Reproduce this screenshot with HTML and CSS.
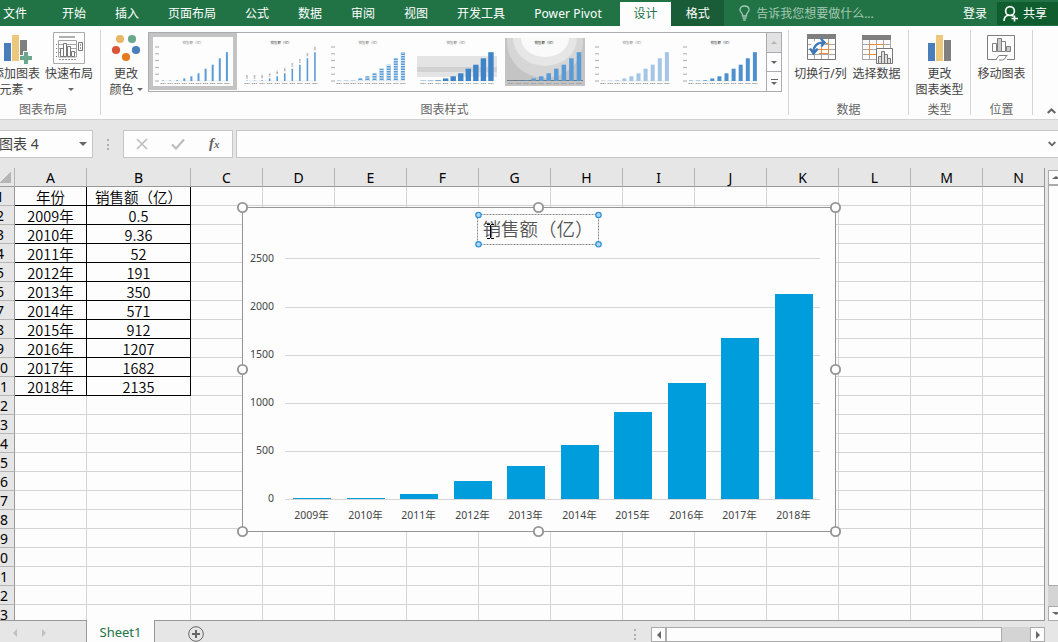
FILE: index.html
```html
<!DOCTYPE html>
<html lang="zh-CN">
<head>
  <meta charset="UTF-8">
  <meta name="viewport" content="width=device-width, initial-scale=1.0">
  <title>销售额</title>
  <link rel="stylesheet" href="styles.css">
</head>
<body>

<nav class="tabs">
  <span class="tab file">文件</span>
  <span class="tab">开始</span>
  <span class="tab">插入</span>
  <span class="tab">页面布局</span>
  <span class="tab">公式</span>
  <span class="tab">数据</span>
  <span class="tab">审阅</span>
  <span class="tab">视图</span>
  <span class="tab">开发工具</span>
  <span class="tab pivot">Power Pivot</span>
  <span class="tab active">设计</span>
  <span class="tab format">格式</span>
  <span class="tell">
    <svg width="11" height="16" viewBox="0 0 11 16" fill="none" stroke="#a5c8b3" stroke-width="1.3">
      <path d="M3.5 11V9.5C3.5 8 1 7.5 1 4.8C1 2.5 3 1 5.5 1S10 2.5 10 4.8C10 7.5 7.5 8 7.5 9.5V11ZM3.5 13H7.5M4.2 15H6.8"/>
    </svg>
    告诉我您想要做什么...
  </span>
  <span class="login">登录</span>
  <span class="share">
    <svg width="16" height="18" viewBox="0 0 16 18" fill="none" stroke="#fff" stroke-width="1.6">
      <circle cx="7" cy="6" r="4.4"/>
      <path d="M1 16C1 12.5 3 10.6 5.5 10.2M8.5 10.2L10.5 11.2M11.5 10.5V16.5M8.5 13.5H15"/>
    </svg>
    共享
  </span>
</nav>

<section class="ribbon">
  <div class="group layout">
    <div class="tools">
      <div class="tool add">
        <svg width="32" height="34" viewBox="0 0 32 34">
          <path fill="#4a7ebb" d="M4 11h7v18H4z"/>
          <path fill="#ecc77c" d="M12 3h7v26h-7z"/>
          <path fill="#7f7f7f" d="M20 8h7v15h-7z"/>
          <path fill="#6aa78c" stroke="#fdfdfd" d="M23.5 19.5h5v4h4v5h-4v4h-5v-4h-4v-5h4z"/>
        </svg>
        <span>添加图表</span>
        <span>元素 <i class="arrow"></i></span>
      </div>
      <div class="tool quick">
        <svg width="32" height="34" viewBox="0 0 32 34" fill="none">
          <path stroke="#ababab" d="M.5 .5h31v31H.5z"/>
          <path stroke="#b0b0b0" stroke-width="2" d="M6 5h16"/>
          <path stroke="#a5a5a5" d="M5.5 8.500h18v16.500h-18zM6 12.500h17M6 16.500h17M6 20.500h17"/>
          <path stroke="#777" stroke-dasharray="1 3" d="M3.500 12v13"/>
          <path stroke="#777" fill="#fff" d="M7.500 16.500h3v8h-3zM10.500 11.500h3v13h-3zM14.500 14.500h3v10h-3zM18.500 19.500h3v5h-3zM25.500 10.500h4v8h-4z"/>
          <path stroke="#999" stroke-dasharray="2 1" d="M6 27.500h17M27.500 12v6"/>
        </svg>
        <span>快速布局</span>
        <span class="solo"><i class="arrow"></i></span>
      </div>
    </div>
    <div class="caption">图表布局</div>
  </div>

  <div class="group styles">
    <div class="tools">
      <div class="tool colors">
        <svg width="32" height="34" viewBox="0 0 32 34">
          <circle cx="10" cy="7" r="4.100" fill="#e9b665"/>
          <circle cx="22" cy="7" r="4.100" fill="#6aa78c"/>
          <circle cx="6" cy="18" r="4.100" fill="#d85636"/>
          <circle cx="26" cy="18" r="4.100" fill="#4a7ebb"/>
          <circle cx="16" cy="25" r="4.100" fill="#e57a1f"/>
        </svg>
        <span>更改</span>
        <span>颜色 <i class="arrow"></i></span>
      </div>
      <div class="gallery">
        <div class="thumbs" id="thumbs"></div>
        <div class="gallery-nav">
          <b class="off"><i class="arrow up"></i></b>
          <b><i class="arrow"></i></b>
          <b class="more"><i class="arrow"></i></b>
        </div>
      </div>
    </div>
    <div class="caption">图表样式</div>
  </div>

  <div class="group data">
    <div class="tools">
      <div class="tool">
        <svg width="32" height="34" viewBox="0 0 32 34" fill="none">
          <path stroke="#a8a8a8" d="M2.500 6v21M9.500 6v21M16.500 6v21M23.500 6v21M2 12.500h28M2 17.500h28M2 22.500h28"/>
          <path stroke="#777" d="M2.500 3.500h28v24h-28z"/>
          <path fill="#7f7f7f" d="M2 2h29v5H2z"/>
          <path stroke="#e88b3a" d="M13.500 17.500h10M16.500 12v10M23.500 11.500v10.500M16 11.500h8M14 21.500h10"/>
          <path fill="#fdfdfd" d="M4 16l4-6 8-3 5 4-4 4-4 2-1 5H8z"/>
          <path stroke="#3f78b8" stroke-width="2.200" d="M8.500 20C8.500 14 12 10.700 18 10.700"/>
          <path fill="#3f78b8" d="M4 17l2-1 2.500 2.500L12 16l1.500 1.500L8.500 23.500zM15 7l1.500-1.200 4.700 4.700-4.200 4.700-1.600-1.200 2-3.500z"/>
        </svg>
        <span>切换行/列</span>
      </div>
      <div class="tool">
        <svg width="32" height="34" viewBox="0 0 32 34" fill="none">
          <path stroke="#a8a8a8" d="M1.500 8v20M8.500 8v20M15.500 8v20M22.500 8v20M29.500 8v10M1 12.500h29M1 17.500h29M1 22.500h20M1 27.500h16"/>
          <path fill="#7f7f7f" d="M1 3h29v5H1z"/>
          <path stroke="#e88b3a" d="M8 12.500h15M8 22.500h7M8.500 12v10"/>
          <path fill="#fdfdfd" stroke="#777" d="M15.500 16.500h16v15h-16z"/>
          <path stroke="#777" fill="#ddd" d="M17.500 24.500h3v7h-3zM20.500 19.500h3v12h-3zM23.500 22.500h3v9h-3zM26.500 26.500h3v5h-3z"/>
        </svg>
        <span>选择数据</span>
      </div>
    </div>
    <div class="caption">数据</div>
  </div>

  <div class="group type">
    <div class="tools">
      <div class="tool">
        <svg width="32" height="34" viewBox="0 0 32 34">
          <path fill="#4a7ebb" d="M4 11h7v18H4z"/>
          <path fill="#ecc77c" d="M12 3h7v26h-7z"/>
          <path fill="#7f7f7f" d="M20 8h7v21h-7z"/>
        </svg>
        <span>更改</span>
        <span>图表类型</span>
      </div>
    </div>
    <div class="caption">类型</div>
  </div>

  <div class="group place">
    <div class="tools">
      <div class="tool">
        <svg width="32" height="34" viewBox="0 0 32 34" fill="none" stroke="#7f7f7f">
          <path d="M10.500 27.500h-9v-24h27v24h-7.500"/>
          <path d="M9.500 28l3.500-4.500h7.500l-1.500 3-2.500 1.500h-3.500M13 23.500h8.500"/>
          <path fill="#fff" d="M6.500 11.500h4v8h-4z"/>
          <path fill="#ccc" d="M11.500 6.500h4v13h-4zM20.500 14.500h4v5h-4z"/>
          <path fill="#fff" d="M15.500 9.500h4v10h-4z"/>
        </svg>
        <span>移动图表</span>
      </div>
    </div>
    <div class="caption">位置</div>
  </div>

  <div class="collapse">
    <svg width="9" height="6" viewBox="0 0 9 6" fill="none" stroke="#666" stroke-width="2"><path d="M.7 5l3.800-3.600L8.300 5"/></svg>
  </div>
</section>

<section class="formula">
  <div class="namebox"><span>图表 4</span><i class="arrow"></i></div>
  <div class="dots"></div>
  <div class="fx">
    <svg width="12" height="12" viewBox="0 0 12 12" fill="none" stroke="#bdbdbd" stroke-width="1.600"><path d="M1 1l10 10M11 1L1 11"/></svg>
    <svg width="14" height="12" viewBox="0 0 14 12" fill="none" stroke="#bdbdbd" stroke-width="2.200"><path d="M1 6.500l4 4L13 1.500"/></svg>
    <em>f<small>x</small></em>
  </div>
  <div class="input">
    <svg width="8" height="6" viewBox="0 0 8 6" fill="none" stroke="#666" stroke-width="1.800"><path d="M.7 1L4 4.300 7.300 1"/></svg>
  </div>
</section>

<main class="sheet">
  <div class="grid" id="grid"></div>
  <div class="vscroll">
    <b><i class="arrow up"></i></b>
    <div class="thumb"></div>
    <div class="track"></div>
    <b><i class="arrow"></i></b>
  </div>
  <svg class="chart" id="chart" width="594" height="325"></svg>
</main>

<footer class="bottom">
  <div class="nav"><i class="arrow left"></i><i class="arrow right"></i></div>
  <div class="sheet-tab">Sheet1</div>
  <div class="new">
    <svg width="16" height="16" viewBox="0 0 16 16" fill="none" stroke="#666"><circle cx="8" cy="8" r="7.300"/><path stroke-width="2" d="M8 4v8M4 8h8"/></svg>
  </div>
  <div class="dots"></div>
  <div class="hscroll">
    <b><i class="arrow left"></i></b>
    <div class="thumb"></div>
    <div class="track"></div>
    <b><i class="arrow right"></i></b>
  </div>
</footer>

<script src="script.js"></script>
</body>
</html>
```
FILE: styles.css
```css
body {
    margin: 0;
    width: 1058px;
    height: 642px;
    overflow: hidden;
    display: flex;
    flex-direction: column;
    background-color: #e6e6e6;
    font-family: "Noto Sans", "Noto Sans CJK SC", sans-serif;
    font-size: 12px;
    color: #444;
}

svg {
    display: block;
    flex: none;
}

/* Menu */
.tabs {
    display: flex;
    height: 26px;
    background-color: #217346;
    color: white;
    line-height: 27px;
    white-space: nowrap;
}

.tab {
    box-sizing: border-box;
    padding: 0 14.5px;
}

.tab.file {
    width: 47.5px;
    padding: 0 0 0 3px;
}

.tab.pivot {
    width: 100.5px;
    letter-spacing: .1px;
}

.tab.active {
    width: 51px;
    padding: 0;
    margin-top: 2px;
    line-height: 23px;
    text-align: center;
    background-color: #fdfdfd;
    color: #217346;
}

.tab.format {
    width: 53px;
    background-color: #1b5c38;
}

.tell {
    display: flex;
    align-items: center;
    gap: 6px;
    margin-left: 15px;
    color: #a5c8b3;
}

.login {
    margin-left: auto;
    margin-right: 10px;
}

.share {
    display: flex;
    align-items: center;
    gap: 4px;
    box-sizing: border-box;
    width: 61px;
    height: 23px;
    margin-top: 2px;
    padding-left: 6px;
    background-color: #0f5c2f;
}

/* Ribbon */
.ribbon {
    display: flex;
    height: 93px;
    background-color: #fdfdfd;
    border-bottom: 1px solid #d2d2d2;
}

.group {
    display: flex;
    flex-direction: column;
    box-sizing: border-box;
    height: 85px;
    margin-top: 4px;
    border-right: 1px solid #d4d4d4;
}

.layout { width: 101px; }
.styles { width: 688px; }
.data { width: 120px; }
.type { width: 62px; }
.place { width: 62px; }

.tools {
    display: flex;
    flex: none;
    height: 69px;
    justify-content: center;
}

.layout .tools,
.styles .tools {
    justify-content: flex-start;
}

.caption {
    text-align: center;
    line-height: 21px;
    color: #666;
    white-space: nowrap;
}

.layout .caption {
    padding-right: 14px;
}

.tool {
    display: flex;
    flex-direction: column;
    align-items: center;
    width: 56px;
    padding-top: 2px;
    line-height: 15.5px;
    white-space: nowrap;
}

.tool.add {
    margin-left: -12px;
}

.tool.quick {
    margin-left: -3px;
}

.tool.colors {
    width: 50px;
}

.tool .solo {
    padding-left: 4px;
}

.arrow {
    display: inline-block;
    width: 0;
    height: 0;
    border: 3px solid transparent;
    border-top: 3px solid #666;
    border-bottom: 0;
    vertical-align: 3px;
}

.arrow.up {
    border-top: 0;
    border-bottom: 3px solid #666;
}

.arrow.left {
    border: 4px solid transparent;
    border-left: 0;
    border-right: 4px solid #666;
}

.arrow.right {
    border: 4px solid transparent;
    border-right: 0;
    border-left: 4px solid #666;
}

.gallery {
    display: flex;
    box-sizing: border-box;
    width: 634px;
    height: 60px;
    margin: 2px 0 0 -3px;
    border: 1px solid #a9abae;
}

.thumbs {
    display: flex;
    width: 617px;
}

.thumbs svg {
    box-sizing: border-box;
    width: 88px;
    height: 57px;
    padding: 5px 4px 4px;
}

.thumbs svg.selected {
    border: 4px solid #c3c3c3;
    padding: 1px 0 0;
}

.gallery-nav {
    display: flex;
    flex-direction: column;
    width: 14px;
    border-left: 1px solid #a9abae;
}

.gallery-nav b {
    display: flex;
    flex: 1;
    align-items: center;
    justify-content: center;
    border-top: 1px solid #a9abae;
}

.gallery-nav .off {
    border-top: 0;
    background-color: #e2e2e2;
}

.gallery-nav .off .arrow {
    border-bottom-color: #b5b5b5;
}

.gallery-nav .more {
    flex-direction: column;
    gap: 2px;
}

.gallery-nav .more::before {
    content: "";
    width: 7px;
    height: 1px;
    background-color: #666;
}

.collapse {
    display: flex;
    align-items: flex-end;
    padding: 0 0 5px 14px;
}

/* Formula bar */
.formula {
    display: flex;
    height: 28px;
    margin: 10px 0;
}

.namebox,
.fx,
.input {
    display: flex;
    align-items: center;
    box-sizing: border-box;
    border: 1px solid #c6c6c6;
    background-color: #fdfdfd;
}

.namebox {
    width: 93px;
    justify-content: space-between;
    border-left: 0;
    padding-right: 5px;
    font-size: 14px;
}

.namebox span {
    margin: -3px 0 0 -1px;
}

.namebox .arrow {
    border-width: 4px 4px 0;
}

.dots {
    width: 2px;
    height: 11px;
    background: repeating-linear-gradient(#b0b0b0 0 2px, transparent 2px 4.5px);
}

.formula .dots {
    margin: 9px 14px 0;
}

.fx {
    width: 110px;
    margin-right: 3px;
    padding-left: 12px;
}

.fx svg + svg {
    margin-left: 23px;
}

.fx em {
    margin: -2px 0 0 24px;
    font: italic bold 15px "Liberation Serif", serif;
    color: #666;
}

.fx small {
    font-size: 11px;
}

.input {
    flex: 1;
    justify-content: flex-end;
    border-right: 0;
    padding-right: 2px;
}

/* Sheet */
.sheet {
    position: relative;
    display: flex;
    height: 452px;
}

.grid {
    display: grid;
    grid-template-columns: 29px 72px 104px repeat(12, 72px);
    grid-auto-rows: 19px;
    box-sizing: border-box;
    width: 1059px;
    height: 453px;
    margin-left: -14px;
    overflow: hidden;
    border-right: 1px solid #999;
    border-bottom: 1px solid #999;
    flex: none;
}

.grid div {
    box-sizing: border-box;
    border-right: 1px solid #d4d4d4;
    border-bottom: 1px solid #d4d4d4;
    background-color: #fdfdfd;
    font-family: "Noto Sans CJK SC", sans-serif;
    font-size: 14.5px;
    font-weight: 350;
    line-height: 20px;
    text-align: center;
    color: black;
    white-space: nowrap;
}

.grid .head {
    border-right-color: #b5b5b5;
    border-bottom-color: #999;
    background-color: #e6e6e6;
    font-family: "Noto Sans", sans-serif;
    font-size: 14px;
    font-weight: 400;
}

.grid .row {
    border-right-color: #999;
    border-bottom-color: #b5b5b5;
}

.grid .corner {
    background: linear-gradient(135deg, transparent 50%, #b5b5b5 50%) 14px 4px / 11px 11px no-repeat #e6e6e6;
    border-right-color: #b5b5b5;
}

.grid .filled {
    border-color: black;
}

.vscroll {
    display: flex;
    flex-direction: column;
    width: 14px;
    height: 451px;
    margin: 2px 0 0 3px;
    background-color: #d4d4d4;
}

.vscroll b,
.hscroll b {
    display: flex;
    align-items: center;
    justify-content: center;
    box-sizing: border-box;
    width: 15px;
    height: 15px;
    border: 1px solid #ababab;
    background-color: #fdfdfd;
}

.vscroll .arrow {
    border-left-width: 4px;
    border-right-width: 4px;
}

.vscroll .thumb {
    width: 15px;
    height: 401px;
    box-sizing: border-box;
    border: 1px solid #ababab;
    background-color: #fdfdfd;
}

.vscroll .track {
    height: 20px;
}

/* Chart */
.chart {
    position: absolute;
    left: 242px;
    top: 39px;
    overflow: visible;
    font-size: 10.5px;
    fill: #444;
}

.chart .title {
    font-family: "Noto Sans CJK SC", sans-serif;
    font-size: 18.5px;
    font-weight: 350;
    fill: #555;
}

/* Bottom bar */
.bottom {
    display: flex;
    height: 22px;
}

.bottom .nav {
    display: flex;
    gap: 25px;
    width: 74px;
    padding: 9px 0 0 13px;
}

.nav .left { border-right-color: #c0c0c0; }
.nav .right { border-left-color: #c0c0c0; }

.sheet-tab {
    position: relative;
    box-sizing: border-box;
    width: 69px;
    border-left: 1px solid #999;
    border-right: 1px solid #999;
    margin-left: -1px;
    background-color: #fdfdfd;
    color: #217346;
    font-size: 13px;
    line-height: 24px;
    text-align: center;
}

.new {
    padding: 6px 0 0 33px;
}

.bottom .dots {
    margin: 9px 15px 0 430px;
}

.hscroll {
    display: flex;
    width: 394px;
    height: 15px;
    margin-top: 7px;
    background-color: #d4d4d4;
}

.hscroll .thumb {
    box-sizing: border-box;
    width: 336px;
    border: 1px solid #ababab;
    background-color: #fdfdfd;
}

.hscroll .track {
    flex: 1;
}
```
FILE: script.js
```js
const dados = [
  ['2009年', 0.5], ['2010年', 9.36], ['2011年', 52], ['2012年', 191], ['2013年', 350],
  ['2014年', 571], ['2015年', 912], ['2016年', 1207], ['2017年', 1682], ['2018年', 2135]
];
const titulo = '销售额（亿）';

// Grid
const grid = document.getElementById('grid');

function addCell(text, cls) {
  const cell = document.createElement('div');
  cell.className = cls;
  cell.textContent = text;
  grid.appendChild(cell);
}

addCell('', 'head corner');
'ABCDEFGHIJKLMN'.split('').forEach(c => addCell(c, 'head'));

for (let r = 1; r <= 23; r++) {
  addCell(r, 'head row');
  for (let c = 0; c < 14; c++) {
    let text = '';
    if (c < 2 && r === 1) text = c ? titulo : '年份';
    if (c < 2 && r > 1 && r <= 11) text = dados[r - 2][c];
    addCell(text, text !== '' ? 'filled' : '');
  }
}

// Chart, origin at the top left corner of the frame
let out = '<rect x=".5" y=".5" width="593" height="324" fill="#fdfdfd" stroke="#959595"/>';

[2500, 2000, 1500, 1000, 500, 0].forEach((v, i) => {
  const y = i === 0 ? 51.5 : 52.5 + i * 48;
  out += `<path d="M43 ${y}H578" stroke="#d6d6d6"/>`;
  out += `<text x="32" y="${55 + i * 48}" text-anchor="end">${v}</text>`;
});

dados.forEach(([ano, v], i) => {
  const h = Math.max(1, Math.floor(v * 0.0962));
  const x = Math.round(51 + i * 53.56);
  out += `<rect x="${x}" y="${292 - h}" width="38" height="${h}" fill="#009ddc"/>`;
  out += `<text x="${x + 18.5}" y="312" text-anchor="middle">${ano}</text>`;
});

out += `<text class="title" x="240.5" y="29">${titulo}</text>`;
out += '<rect x="235.5" y="7.5" width="121" height="30" fill="none" stroke="#888" stroke-dasharray="2 1"/>';

[0.5, 296.5, 593.5].forEach(x => [0.5, 162.5, 324.5].forEach(y => {
  if (x === 296.5 && y === 162.5) return;
  out += `<circle cx="${x}" cy="${y}" r="4.600" fill="#fff" stroke="#959595" stroke-width="1.900"/>`;
}));

[236.5, 356.5].forEach(x => [8, 37.3].forEach(y => {
  out += `<circle cx="${x}" cy="${y}" r="2.700" fill="#acd6f5" stroke="#2b8fd8" stroke-width="1.200"/>`;
}));

// text cursor
out += '<path d="M245 17.500h3M249 17.500h3M248.500 18v13M245 31.500h3M249 31.500h3" stroke="#000" fill="none"/>';
document.getElementById('chart').innerHTML = out;

// Style gallery
const thumbs = document.getElementById('thumbs');
const estilos = [
  { w: 2, color: '#5b9bd5', axis: true, title: '#888' },
  { w: 1.6, color: '#5b9bd5', labels: true, title: '#444' },
  { w: 4, color: '#5b9bd5', axis: true, stripes: true, title: '#777' },
  { w: 5.4, color: '#3d85c8', bands: true, title: '#777' },
  { w: 4.5, color: '#5b9bd5', glow: true, title: '#222' },
  { w: 4, color: '#a5c5e6', axis: true, title: '#888' },
  { w: 4, color: '#4d90d0', axis: true, title: '#334' }
];

estilos.forEach((s, n) => {
  let g = '';
  if (s.bands) g += '<path fill="#e4e4e4" d="M0 18h80v21H0z"/><path fill="#d2d2d2" d="M0 29h80v5H0z"/>';
  if (s.glow) {
    g += '<path fill="#c4c4c4" d="M0 0h80v48H0z"/><ellipse cx="40" cy="4" rx="38" ry="36" fill="#d6d6d6"/>';
    g += '<ellipse cx="40" cy="0" rx="32" ry="28" fill="#e6e6e6"/><ellipse cx="40" cy="0" rx="24" ry="19" fill="#fafafa"/>';
    g += '<path d="M2 42.500h76" stroke="#777"/>';
  } else {
    g += '<path d="M8 43h68" stroke="#ddd" stroke-width=".6"/>';
  }
  const start = s.axis ? 10 : 6;
  const step = s.axis ? 7.1 : 7.55;
  dados.forEach(([, v], i) => {
    const h = Math.max(0.4, v * 0.0135);
    const x = start + i * step;
    g += `<path d="M${x} 43v${-h}" stroke="${s.color}" stroke-width="${s.w}"/>`;
    if (s.stripes) g += `<path d="M${x} 43v${-h}" stroke="#dce9f6" stroke-width="4" stroke-dasharray="1 1.500"/>`;
    if (s.labels) g += `<path d="M${x} ${41 - h}v-3.500" stroke="#aaa" stroke-width="1.600" stroke-dasharray="1 .4"/>`;
    g += `<path d="M${x - 2.6} 45.500h5.200" stroke="#999" stroke-width=".9" stroke-dasharray="1.600 .4"/>`;
  });
  if (s.axis) {
    for (let y = 9; y < 44; y += 6.8) g += `<path d="M2 ${y}h4" stroke="#aaa"/>`;
  }
  g += `<text x="40" y="6" font-size="3.500" text-anchor="middle" fill="${s.title}">${titulo}</text>`;
  thumbs.innerHTML += `<svg class="${n === 0 ? 'selected' : ''}" viewBox="0 0 80 48">${g}</svg>`;
});
```
